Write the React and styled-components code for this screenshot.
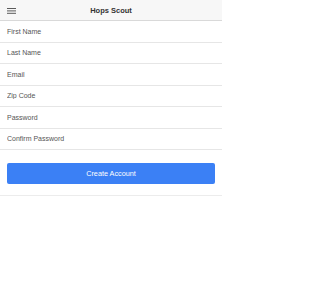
import React from "react";
import styled, { createGlobalStyle } from "styled-components";

const GlobalStyle = createGlobalStyle`
  html, body {
    margin: 0;
    padding: 0;
    background: #ffffff;
  }
  body {
    font-family: "Liberation Sans", Arial, sans-serif;
  }
`;

const fields = [
  "First Name",
  "Last Name",
  "Email",
  "Zip Code",
  "Password",
  "Confirm Password",
];

const App = () => {
  return (
    <>
      <GlobalStyle />
      <Page>
        <TopBar>
          <MenuButton aria-label="menu">
            <svg width="9" height="6" viewBox="0 0 9 6">
              <rect x="0" y="0" width="9" height="1" fill="#5a5a5a" />
              <rect x="0" y="2.4" width="9" height="1" fill="#5a5a5a" />
              <rect x="0" y="4.8" width="9" height="1" fill="#5a5a5a" />
            </svg>
          </MenuButton>
          <Title>Hops Scout</Title>
        </TopBar>
        <Form>
          {fields.map((label) => (
            <Row key={label}>
              <Input placeholder={label} />
            </Row>
          ))}
          <ButtonArea>
            <SubmitButton>Create Account</SubmitButton>
          </ButtonArea>
        </Form>
      </Page>
    </>
  );
};

const Page = styled.div`
  width: 222px;
  min-height: 300px;
  background: #ffffff;
`;

const TopBar = styled.div`
  height: 21px;
  box-sizing: border-box;
  display: flex;
  align-items: center;
  justify-content: center;
  position: relative;
  background: #f7f7f7;
  border-bottom: 1px solid #d9d9d9;
`;

const MenuButton = styled.div`
  position: absolute;
  left: 7px;
  top: 8px;
  display: flex;
`;

const Title = styled.div`
  font-size: 7.5px;
  font-weight: bold;
  color: #333333;
`;

const Form = styled.div`
  display: flex;
  flex-direction: column;
`;

const Row = styled.div`
  height: 21.5px;
  box-sizing: border-box;
  display: flex;
  align-items: center;
  padding: 0 7px;
  border-bottom: 1px solid #e6e6e6;
`;

const Input = styled.input`
  border: none;
  outline: none;
  padding: 0;
  width: 100%;
  background: transparent;
  font-family: "Liberation Sans", Arial, sans-serif;
  font-size: 7px;
  color: #444;
  &::placeholder {
    color: #555555;
  }
`;

const ButtonArea = styled.div`
  padding: 12px 7px 11px;
  border-bottom: 1px solid #ececec;
`;

const SubmitButton = styled.button`
  width: 100%;
  height: 21px;
  border: none;
  border-radius: 2px;
  background: #3b80f5;
  color: #ffffff;
  font-family: "Liberation Sans", Arial, sans-serif;
  font-size: 7.25px;
  padding: 0;
`;

export default App;
